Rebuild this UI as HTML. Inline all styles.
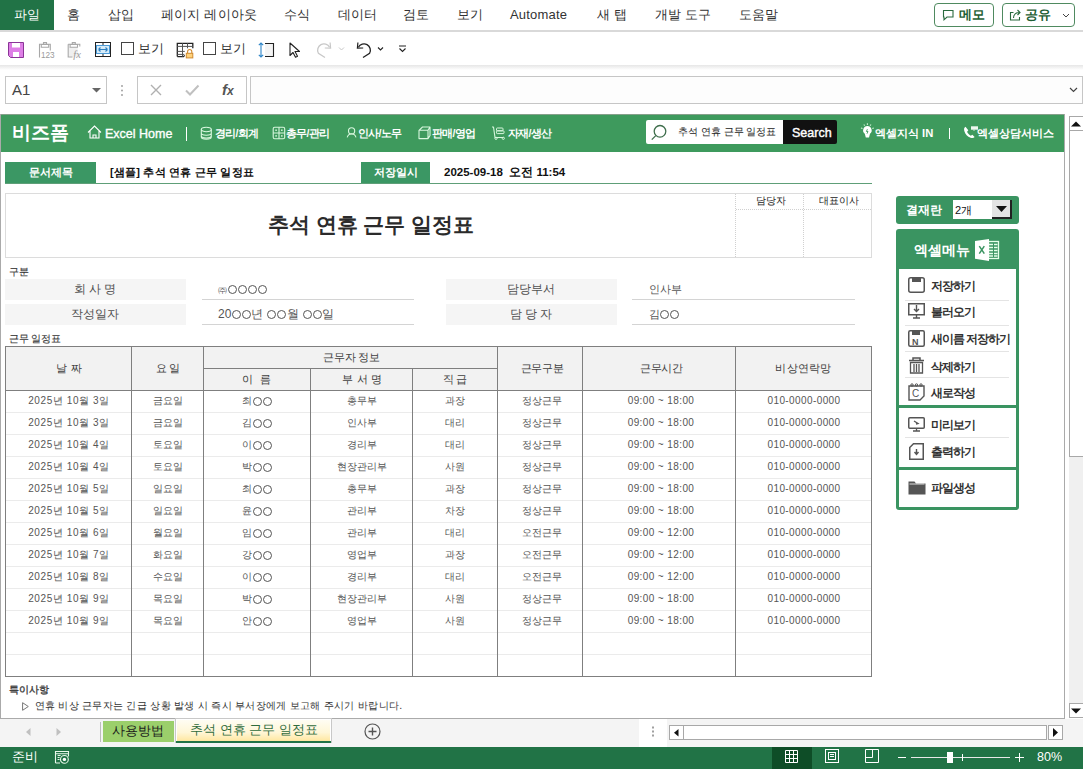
<!DOCTYPE html>
<html><head><meta charset="utf-8">
<style>
*{margin:0;padding:0;box-sizing:border-box}
html,body{width:1083px;height:769px;overflow:hidden;background:#fff;font-family:"Liberation Sans",sans-serif;color:#262626}
.a{position:absolute}
.t{position:absolute;white-space:nowrap;line-height:0;height:0}
.tc{position:absolute;white-space:nowrap;line-height:0;height:0;transform:translateX(-50%)}
svg{position:absolute;overflow:visible}
.o{display:inline-block;width:9px;height:9px;border:1px solid currentColor;border-radius:50%;vertical-align:0.3465em;margin:-4.5px 0.5px}
</style></head><body>

<div class="a" style="left:0px;top:0px;width:54px;height:30px;background:#217346"></div>
<div class="t" style="left:14px;top:15px;font-size:13px;color:#fff;font-weight:normal;letter-spacing:0.2px;">파일</div>
<div class="t" style="left:67px;top:15px;font-size:13px;color:#333;font-weight:normal;letter-spacing:0.2px;">홈</div>
<div class="t" style="left:108px;top:15px;font-size:13px;color:#333;font-weight:normal;letter-spacing:0.2px;">삽입</div>
<div class="t" style="left:161px;top:15px;font-size:13px;color:#333;font-weight:normal;letter-spacing:0.2px;">페이지 레이아웃</div>
<div class="t" style="left:284px;top:15px;font-size:13px;color:#333;font-weight:normal;letter-spacing:0.2px;">수식</div>
<div class="t" style="left:338px;top:15px;font-size:13px;color:#333;font-weight:normal;letter-spacing:0.2px;">데이터</div>
<div class="t" style="left:403px;top:15px;font-size:13px;color:#333;font-weight:normal;letter-spacing:0.2px;">검토</div>
<div class="t" style="left:457px;top:15px;font-size:13px;color:#333;font-weight:normal;letter-spacing:0.2px;">보기</div>
<div class="t" style="left:510px;top:15px;font-size:13px;color:#333;font-weight:normal;letter-spacing:0.2px;">Automate</div>
<div class="t" style="left:597px;top:15px;font-size:13px;color:#333;font-weight:normal;letter-spacing:0.2px;">새 탭</div>
<div class="t" style="left:655px;top:15px;font-size:13px;color:#333;font-weight:normal;letter-spacing:0.2px;">개발 도구</div>
<div class="t" style="left:739px;top:15px;font-size:13px;color:#333;font-weight:normal;letter-spacing:0.2px;">도움말</div>
<div class="a" style="left:0px;top:30px;width:1083px;height:2px;background:#d9d9d9"></div>
<div class="a" style="left:934px;top:3px;width:60px;height:24px;border:1px solid #4f8a60;border-radius:4px"></div>
<svg style="left:942px;top:9px" width="12" height="12" viewBox="0 0 12 12"><path d="M1.5 1.5h9.5v6.5h-6l-3 2.8v-2.8h-0.5z" fill="none" stroke="#2a6b3e" stroke-width="1.1"/></svg>
<div class="t" style="left:959px;top:15px;font-size:13px;color:#1e5e34;font-weight:bold;">메모</div>
<div class="a" style="left:1002px;top:3px;width:73px;height:24px;border:1px solid #4f8a60;border-radius:4px"></div>
<svg style="left:1009px;top:8px" width="13" height="13" viewBox="0 0 13 13"><path d="M4.5 4.5H1.5v7.5h9V9" fill="none" stroke="#2a6b3e" stroke-width="1.1"/><path d="M4.5 10c0-3.5 2.5-5.5 6-5.5M8.5 2L11 4.5 8.5 7" fill="none" stroke="#2a6b3e" stroke-width="1.1"/></svg>
<div class="t" style="left:1025px;top:15px;font-size:13px;color:#1e5e34;font-weight:bold;">공유</div>
<svg style="left:1062px;top:13px" width="8" height="5" viewBox="0 0 8 5"><path d="M1 1l3 3 3-3" fill="none" stroke="#444" stroke-width="1"/></svg>
<div class="a" style="left:0px;top:65px;width:1083px;height:5px;background:linear-gradient(#e6e6e6,#fff)"></div>
<svg style="left:8px;top:42px" width="16" height="16" viewBox="0 0 16 16"><path d="M0.5 0.5h15v15h-13l-2-2z" fill="#de7fe6" stroke="#8a3597" stroke-width="1"/><rect x="4" y="1" width="8" height="4.5" fill="#fff"/><rect x="5" y="10" width="6" height="5" fill="#fff"/></svg>
<svg style="left:38px;top:41px" width="16" height="18" viewBox="0 0 16 18"><path d="M1.5 16.6V3.2h10.8v6.2" fill="none" stroke="#a8a8a8" stroke-width="1.1"/><path d="M3.3 3.5h7.4v2.8H3.3zM5.5 3.5V1.6h3v1.9" fill="none" stroke="#a8a8a8" stroke-width="1.1"/><text x="3" y="16.9" font-size="8.2" fill="#9a9a9a" font-family="Liberation Sans">123</text></svg>
<svg style="left:67px;top:41px" width="16" height="18" viewBox="0 0 16 18"><rect x="1.7" y="6" width="9" height="9.6" fill="#f0f0f0"/><path d="M1.2 3.2v12.8h4.3M1.2 3.2h11.6v2.4" fill="none" stroke="#a8a8a8" stroke-width="1.1"/><path d="M3.1 3.5h7.4v2.8H3.1zM5.3 3.5V1.6h3v1.9" fill="none" stroke="#a8a8a8" stroke-width="1.1"/><text x="6.3" y="16.6" font-size="10.5" font-style="italic" fill="#9a9a9a" font-family="Liberation Serif">fx</text></svg>
<svg style="left:95px;top:42px" width="16" height="15" viewBox="0 0 16 15"><rect x="0.5" y="0.5" width="15" height="14" fill="#fff" stroke="#222" stroke-width="1"/><rect x="1.5" y="3.5" width="13" height="8" fill="#d6ebf8" stroke="#4b9ad6" stroke-width="1"/><path d="M3.5 7.5h9M3.5 7.5l2-2M3.5 7.5l2 2M12.5 7.5l-2-2M12.5 7.5l-2 2" stroke="#2d7fc0" stroke-width="1.1" fill="none"/><path d="M8 0.5v2.5M8 12v2.5" stroke="#222" stroke-width="1"/></svg>
<div class="a" style="left:121px;top:42px;width:13px;height:13px;border:1px solid #444"></div>
<div class="t" style="left:138px;top:49px;font-size:13px;color:#333;font-weight:normal;">보기</div>
<svg style="left:176px;top:42px" width="18" height="17" viewBox="0 0 18 17"><path d="M1.3 14.6V1.3h15.5v5M1.3 14.6h6.2l1.2-1.2" fill="none" stroke="#222" stroke-width="1.3"/><path d="M6.5 1.3v13.3M11.5 1.3v5M1.3 4.4h15.5M1.3 9.4h7.5M1.3 12.4h7" fill="none" stroke="#555" stroke-width="1"/><path d="M11.6 11.3V9.6a2.1 2.1 0 014.2 0v1.7" fill="none" stroke="#d08a30" stroke-width="1.1"/><rect x="10.3" y="11.3" width="6.5" height="4.6" fill="#ffd27a" stroke="#d08a30" stroke-width="1"/></svg>
<div class="a" style="left:203px;top:42px;width:13px;height:13px;border:1px solid #444"></div>
<div class="t" style="left:220px;top:49px;font-size:13px;color:#333;font-weight:normal;">보기</div>
<svg style="left:258px;top:41px" width="18" height="18" viewBox="0 0 18 18"><path d="M7 2.5h8.5v13H7" fill="#f4f4f4" stroke="#222" stroke-width="1.1"/><path d="M3 2v14M0.8 4.2L3 2l2.2 2.2M0.8 13.8L3 16l2.2-2.2" fill="none" stroke="#2f86c8" stroke-width="1.1"/></svg>
<svg style="left:289px;top:42px" width="13" height="16" viewBox="0 0 13 16"><path d="M1 1v12.5l3-3 2.5 4.8 2-1-2.5-4.8h4.5z" fill="#fff" stroke="#222" stroke-width="1.1" stroke-linejoin="round"/></svg>
<svg style="left:316px;top:41px" width="30" height="18" viewBox="0 0 30 18"><g transform="translate(17,0) scale(-1,1)"><path d="M3.4 6.2A6.2 6.2 0 1 1 14.6 12.3L8 16.5" fill="none" stroke="#c8c8c8" stroke-width="1.3"/><path d="M2.9 1.5L2.4 7.2L8.2 7" fill="none" stroke="#c8c8c8" stroke-width="1.2"/></g><path d="M23 6.5l2.5 2.5 2.5-2.5" fill="none" stroke="#c8c8c8" stroke-width="1"/></svg>
<svg style="left:355px;top:41px" width="30" height="18" viewBox="0 0 30 18"><path d="M3.4 6.2A6.2 6.2 0 1 1 14.6 12.3L8 16.5" fill="none" stroke="#222" stroke-width="1.3"/><path d="M2.9 1.5L2.4 7.2L8.2 7" fill="none" stroke="#222" stroke-width="1.2"/><path d="M23 6.5l2.5 2.5 2.5-2.5" fill="none" stroke="#222" stroke-width="1.1"/></svg>
<svg style="left:398px;top:45px" width="9" height="9" viewBox="0 0 9 9"><path d="M1 1h7M1.5 3.5l3 3 3-3" fill="none" stroke="#222" stroke-width="1.1"/></svg>
<div class="a" style="left:5px;top:76px;width:102px;height:28px;border:1px solid #c6c6c6;background:#fff"></div>
<div class="t" style="left:12px;top:90px;font-size:15px;color:#444;font-weight:normal;">A1</div>
<svg style="left:92px;top:88px" width="9" height="5" viewBox="0 0 9 5"><path d="M0 0h9L4.5 4.5z" fill="#666"/></svg>
<svg style="left:120px;top:83px" width="4" height="14" viewBox="0 0 4 14"><circle cx="2" cy="3" r="0.9" fill="#999"/><circle cx="2" cy="7.5" r="0.9" fill="#999"/><circle cx="2" cy="12" r="0.9" fill="#999"/></svg>
<div class="a" style="left:137px;top:76px;width:110px;height:28px;border:1px solid #c6c6c6;background:#fff"></div>
<svg style="left:150px;top:84px" width="12" height="12" viewBox="0 0 12 12"><path d="M1 1l10 10M11 1L1 11" stroke="#b0b0b0" stroke-width="1.4"/></svg>
<svg style="left:185px;top:84px" width="15" height="12" viewBox="0 0 15 12"><path d="M1 6.5l4 4 8.5-9" fill="none" stroke="#c0c0c0" stroke-width="2"/></svg>
<div class="t" style="left:222px;top:90px;font-size:15px;color:#555;font-weight:bold;font-family:"Liberation Serif",serif;"><i>f</i><span style="font-size:12px"><i>x</i></span></div>
<div class="a" style="left:250px;top:76px;width:833px;height:28px;border:1px solid #c6c6c6;background:#fdfdfd"></div>
<svg style="left:1069px;top:87px" width="9" height="6" viewBox="0 0 9 6"><path d="M1 1l3.5 3.5L8 1" fill="none" stroke="#444" stroke-width="1.2"/></svg>
<div class="a" style="left:0px;top:114px;width:1065px;height:605px;border-left:1px solid #aaa;border-right:1px solid #aaa;border-bottom:1px solid #aaa;background:#fff"></div>
<div class="a" style="left:1px;top:114px;width:1063px;height:38px;background:#3e9a5d"></div>
<div class="a" style="left:1px;top:114px;width:1063px;height:1px;background:#86a08b"></div>
<div class="t" style="left:12px;top:133px;font-size:19px;color:#fff;font-weight:bold;">비즈폼</div>
<svg style="left:87px;top:125px" width="15" height="14" viewBox="0 0 15 14"><path d="M1 7.5L7.5 1 14 7.5M3 6v7h9V6M6 13v-3h3v3" fill="none" stroke="#fff" stroke-width="1.1"/></svg>
<div class="t" style="left:105px;top:134px;font-size:12.5px;color:#fff;font-weight:normal;-webkit-text-stroke:0.35px #fff;">Excel Home</div>
<div class="a" style="left:186px;top:127px;width:1px;height:14px;background:#fff"></div>
<svg style="left:200px;top:126px" width="13" height="14" viewBox="0 0 13 14"><ellipse cx="6.3" cy="3.5" rx="5" ry="2.2" fill="none" stroke="#d8f7de" stroke-width="1.1"/><path d="M1.3 3.5v7.5c0 1.2 2.2 2.2 5 2.2s5-1 5-2.2V3.5M1.3 7c0 1.2 2.2 2.2 5 2.2s5-1 5-2.2M1.3 9.8c0 1.2 2.2 2.2 5 2.2s5-1 5-2.2" fill="none" stroke="#d8f7de" stroke-width="1.1"/></svg>
<div class="t" style="left:215px;top:133px;font-size:10.5px;color:#fff;font-weight:bold;letter-spacing:-0.8px;">경리/회계</div>
<svg style="left:272px;top:126px" width="14" height="14" viewBox="0 0 14 14"><rect x="1.2" y="1.2" width="11.5" height="11.5" rx="1.5" fill="none" stroke="#d8f7de" stroke-width="1.1"/><path d="M7 1.2v11.5M1.2 7h11.5" stroke="#d8f7de" stroke-width="1.1"/><rect x="3.3" y="3.5" width="1.6" height="1.4" fill="#d8f7de"/><rect x="9" y="3.5" width="1.6" height="1.4" fill="#d8f7de"/><rect x="3.3" y="9.2" width="1.6" height="1.4" fill="#d8f7de"/><rect x="9" y="9.2" width="1.6" height="1.4" fill="#d8f7de"/></svg>
<div class="t" style="left:286px;top:133px;font-size:10.5px;color:#fff;font-weight:bold;letter-spacing:-0.8px;">총무/관리</div>
<svg style="left:346px;top:126px" width="12" height="13" viewBox="0 0 12 13"><circle cx="5.6" cy="4.9" r="3.1" fill="none" stroke="#d8f7de" stroke-width="1.1"/><path d="M1.2 11.3c0.8-2.4 2.4-3.6 4.4-3.6s3.6 1.2 4.4 3.6" fill="none" stroke="#d8f7de" stroke-width="1.1"/></svg>
<div class="t" style="left:358px;top:133px;font-size:10.5px;color:#fff;font-weight:bold;letter-spacing:-0.8px;">인사/노무</div>
<svg style="left:418px;top:126px" width="13" height="14" viewBox="0 0 13 14"><path d="M1 4.3h9v8.3H1zM1 4.3L4.5 1h7.5L10 4.3M12 1v8.5l-2 3.1" fill="none" stroke="#d8f7de" stroke-width="1.1" stroke-linejoin="round"/></svg>
<div class="t" style="left:432px;top:133px;font-size:10.5px;color:#fff;font-weight:bold;letter-spacing:-0.8px;">판매/영업</div>
<svg style="left:491px;top:126px" width="15" height="14" viewBox="0 0 15 14"><path d="M1 1h1.5l1.5 10.5h8.5" fill="none" stroke="#d8f7de" stroke-width="1.1" stroke-linejoin="round"/><rect x="5.5" y="2" width="6.5" height="2.8" rx="0.8" fill="none" stroke="#d8f7de" stroke-width="1"/><rect x="5.5" y="4.8" width="7.5" height="2.8" rx="0.8" fill="none" stroke="#d8f7de" stroke-width="1"/><circle cx="5" cy="12.3" r="1.1" fill="none" stroke="#d8f7de" stroke-width="1"/><circle cx="12.3" cy="12.3" r="1.1" fill="none" stroke="#d8f7de" stroke-width="1"/></svg>
<div class="t" style="left:508px;top:133px;font-size:10.5px;color:#fff;font-weight:bold;letter-spacing:-0.8px;">자재/생산</div>
<div class="a" style="left:646px;top:120px;width:138px;height:24px;background:#fff;border-radius:2px 0 0 2px"></div>
<svg style="left:650px;top:124px" width="18" height="18" viewBox="0 0 18 18"><circle cx="10" cy="7.3" r="5.8" fill="none" stroke="#3f6e4c" stroke-width="1.3"/><path d="M5.8 11.6L1.8 15.6" stroke="#3f6e4c" stroke-width="1.3"/></svg>
<div class="t" style="left:678px;top:132px;font-size:10.2px;color:#222;font-weight:normal;">추석 연휴 근무 일정표</div>
<div class="a" style="left:783px;top:120px;width:54px;height:24px;background:#111;border-radius:0 2px 2px 0"></div>
<div class="t" style="left:792px;top:133px;font-size:12.5px;color:#fff;font-weight:normal;-webkit-text-stroke:0.4px #fff;">Search</div>
<svg style="left:860px;top:123px" width="15" height="16" viewBox="0 0 15 16"><path d="M7.4 3a4.3 4.3 0 00-2.6 7.7L5.8 14.5h3.2l1-3.8A4.3 4.3 0 007.4 3z" fill="#fff"/><path d="M7.4 6.2l-1 2.3h1.6l-1 2.2" fill="none" stroke="#3e9a5d" stroke-width="0.9"/><path d="M7.4 0.3v1.6M3.8 1.5l0.9 1.2M11 1.5l-0.9 1.2M1 5l1.5 0.6M13.8 5l-1.5 0.6" stroke="#c8f0d0" stroke-width="1.1"/></svg>
<div class="t" style="left:875px;top:133px;font-size:11.2px;color:#fff;font-weight:bold;">엑셀지식 IN</div>
<div class="a" style="left:949px;top:128px;width:1px;height:11px;background:#fff"></div>
<svg style="left:963px;top:125px" width="16" height="14" viewBox="0 0 16 14"><path d="M2.5 1.8C1.2 2.5 0.8 4 1.3 6c0.8 3 3.3 5.8 6.3 6.8 1.8 0.6 3.3 0.3 4-0.8l-2.2-2.2-1.6 1C6.3 10 4.7 8.2 4.1 6.7L5.3 5.3z" fill="#fff"/><rect x="8" y="1.3" width="7" height="3.4" fill="#eef7ef"/><path d="M10 4.7l1 1.3 1-1.3z" fill="#eef7ef"/></svg>
<div class="t" style="left:977px;top:133px;font-size:11.4px;color:#fff;font-weight:bold;">엑셀상담서비스</div>
<div class="a" style="left:5px;top:162px;width:91px;height:21px;background:#3b9764"></div>
<div class="tc" style="left:51px;top:172px;font-size:11px;color:#fff;font-weight:bold;">문서제목</div>
<div class="t" style="left:110px;top:171.5px;font-size:11px;color:#111;font-weight:bold;letter-spacing:0.2px;">[샘플] 추석 연휴 근무 일정표</div>
<div class="a" style="left:361px;top:162px;width:69px;height:21px;background:#3b9764"></div>
<div class="tc" style="left:396px;top:172px;font-size:11px;color:#fff;font-weight:bold;">저장일시</div>
<div class="t" style="left:444px;top:172px;font-size:11.5px;color:#111;font-weight:bold;">2025-09-18&nbsp; 오전 11:54</div>
<div class="a" style="left:5px;top:183px;width:867px;height:1px;background:#5e9f78"></div>
<div class="a" style="left:5px;top:193px;width:867px;height:65px;border:1px solid #dcdcdc"></div>
<div class="tc" style="left:371px;top:225px;font-size:21.4px;color:#2b2b2b;font-weight:bold;">추석 연휴 근무 일정표</div>
<div class="a" style="left:735px;top:194px;width:1px;height:63px;border-left:1px dotted #d0d0d0"></div>
<div class="a" style="left:803px;top:194px;width:1px;height:63px;border-left:1px dotted #d0d0d0"></div>
<div class="a" style="left:736px;top:209px;width:135px;height:1px;border-top:1px dotted #d0d0d0"></div>
<div class="tc" style="left:770.5px;top:200.5px;font-size:10px;color:#222;font-weight:normal;">담당자</div>
<div class="tc" style="left:838.5px;top:200.5px;font-size:10px;color:#222;font-weight:normal;">대표이사</div>
<div class="t" style="left:8.5px;top:272px;font-size:10px;color:#333;font-weight:normal;-webkit-text-stroke:0.1px #333;">구분</div>
<div class="a" style="left:5px;top:279px;width:181px;height:21px;background:#f5f5f5"></div>
<div class="tc" style="left:95px;top:289px;font-size:12px;color:#505050;font-weight:normal;">회 사 명</div>
<div class="t" style="left:218px;top:289px;font-size:12px;color:#555;font-weight:normal;"><span style="font-size:9px">㈜</span><span class="o"></span><span class="o"></span><span class="o"></span><span class="o"></span></div>
<div class="a" style="left:202px;top:299px;width:212px;height:1px;background:#d4d4d4"></div>
<div class="a" style="left:5px;top:304px;width:181px;height:21px;background:#f5f5f5"></div>
<div class="tc" style="left:95px;top:314px;font-size:12px;color:#505050;font-weight:normal;">작성일자</div>
<div class="t" style="left:218px;top:314px;font-size:12px;color:#555;font-weight:normal;">20<span class="o"></span><span class="o"></span>년 <span class="o"></span><span class="o"></span>월 <span class="o"></span><span class="o"></span>일</div>
<div class="a" style="left:202px;top:324px;width:212px;height:1px;background:#d4d4d4"></div>
<div class="a" style="left:446px;top:279px;width:171px;height:21px;background:#f5f5f5"></div>
<div class="tc" style="left:531px;top:289px;font-size:12px;color:#505050;font-weight:normal;">담당부서</div>
<div class="t" style="left:648.5px;top:289px;font-size:11px;color:#555;font-weight:normal;">인사부</div>
<div class="a" style="left:632px;top:299px;width:223px;height:1px;background:#d4d4d4"></div>
<div class="a" style="left:446px;top:304px;width:171px;height:21px;background:#f5f5f5"></div>
<div class="tc" style="left:531px;top:314px;font-size:12px;color:#505050;font-weight:normal;">담 당 자</div>
<div class="t" style="left:648.5px;top:314px;font-size:11px;color:#555;font-weight:normal;">김<span class="o"></span><span class="o"></span></div>
<div class="a" style="left:632px;top:324px;width:223px;height:1px;background:#d4d4d4"></div>
<div class="t" style="left:8.5px;top:339px;font-size:10px;color:#333;font-weight:normal;-webkit-text-stroke:0.1px #333;">근무 일정표</div>
<div class="a" style="left:5px;top:346px;width:867px;height:44px;background:#f2f2f2"></div>
<div class="a" style="left:6px;top:412px;width:865px;height:1px;background:#ebebeb"></div>
<div class="a" style="left:6px;top:434px;width:865px;height:1px;background:#ebebeb"></div>
<div class="a" style="left:6px;top:456px;width:865px;height:1px;background:#ebebeb"></div>
<div class="a" style="left:6px;top:478px;width:865px;height:1px;background:#ebebeb"></div>
<div class="a" style="left:6px;top:500px;width:865px;height:1px;background:#ebebeb"></div>
<div class="a" style="left:6px;top:522px;width:865px;height:1px;background:#ebebeb"></div>
<div class="a" style="left:6px;top:544px;width:865px;height:1px;background:#ebebeb"></div>
<div class="a" style="left:6px;top:566px;width:865px;height:1px;background:#ebebeb"></div>
<div class="a" style="left:6px;top:588px;width:865px;height:1px;background:#ebebeb"></div>
<div class="a" style="left:6px;top:610px;width:865px;height:1px;background:#ebebeb"></div>
<div class="a" style="left:6px;top:632px;width:865px;height:1px;background:#ebebeb"></div>
<div class="a" style="left:6px;top:654px;width:865px;height:1px;background:#ebebeb"></div>
<div class="a" style="left:5px;top:390px;width:867px;height:1px;background:#7f7f7f"></div>
<div class="a" style="left:203px;top:368px;width:294px;height:1px;background:#7f7f7f"></div>
<div class="a" style="left:5px;top:346px;width:1px;height:331px;background:#7f7f7f"></div>
<div class="a" style="left:131px;top:346px;width:1px;height:331px;background:#7f7f7f"></div>
<div class="a" style="left:203px;top:346px;width:1px;height:331px;background:#7f7f7f"></div>
<div class="a" style="left:310px;top:368px;width:1px;height:309px;background:#7f7f7f"></div>
<div class="a" style="left:412px;top:368px;width:1px;height:309px;background:#7f7f7f"></div>
<div class="a" style="left:497px;top:346px;width:1px;height:331px;background:#7f7f7f"></div>
<div class="a" style="left:582px;top:346px;width:1px;height:331px;background:#7f7f7f"></div>
<div class="a" style="left:735px;top:346px;width:1px;height:331px;background:#7f7f7f"></div>
<div class="a" style="left:871px;top:346px;width:1px;height:331px;background:#7f7f7f"></div>
<div class="a" style="left:5px;top:346px;width:867px;height:1px;background:#7f7f7f"></div>
<div class="a" style="left:5px;top:676px;width:867px;height:1px;background:#7f7f7f"></div>
<div class="tc" style="left:69.5px;top:368px;font-size:10.5px;color:#404040;font-weight:normal;letter-spacing:0.5px;">날 짜</div>
<div class="tc" style="left:168px;top:368px;font-size:10.5px;color:#404040;font-weight:normal;">요 일</div>
<div class="tc" style="left:351.5px;top:357px;font-size:10.5px;color:#404040;font-weight:normal;letter-spacing:-0.25px;">근무자 정보</div>
<div class="tc" style="left:257.5px;top:379px;font-size:10.5px;color:#404040;font-weight:normal;letter-spacing:2px;">이 름</div>
<div class="tc" style="left:362.5px;top:379px;font-size:10.5px;color:#404040;font-weight:normal;letter-spacing:0.3px;">부 서 명</div>
<div class="tc" style="left:455px;top:379px;font-size:10.5px;color:#404040;font-weight:normal;letter-spacing:-0.5px;">직 급</div>
<div class="tc" style="left:542px;top:368px;font-size:10.5px;color:#404040;font-weight:normal;letter-spacing:-0.25px;">근무구분</div>
<div class="tc" style="left:661px;top:368px;font-size:10.5px;color:#404040;font-weight:normal;letter-spacing:-0.5px;">근무시간</div>
<div class="tc" style="left:803.5px;top:368px;font-size:10.5px;color:#404040;font-weight:normal;letter-spacing:0.3px;">비상연락망</div>
<div class="tc" style="left:69px;top:401px;font-size:10px;color:#555;font-weight:normal;letter-spacing:0.6px;">2025년 10월 3일</div>
<div class="tc" style="left:168px;top:401px;font-size:10px;color:#555;font-weight:normal;">금요일</div>
<div class="tc" style="left:257px;top:401px;font-size:10px;color:#555;font-weight:normal;">최<span class="o"></span><span class="o"></span></div>
<div class="tc" style="left:362px;top:401px;font-size:10px;color:#555;font-weight:normal;">총무부</div>
<div class="tc" style="left:455px;top:401px;font-size:10px;color:#555;font-weight:normal;">과장</div>
<div class="tc" style="left:542px;top:401px;font-size:10px;color:#555;font-weight:normal;">정상근무</div>
<div class="tc" style="left:661px;top:401px;font-size:10px;color:#555;font-weight:normal;letter-spacing:0.4px;">09:00 ~ 18:00</div>
<div class="tc" style="left:804px;top:401px;font-size:10px;color:#555;font-weight:normal;letter-spacing:0.4px;">010-0000-0000</div>
<div class="tc" style="left:69px;top:423px;font-size:10px;color:#555;font-weight:normal;letter-spacing:0.6px;">2025년 10월 3일</div>
<div class="tc" style="left:168px;top:423px;font-size:10px;color:#555;font-weight:normal;">금요일</div>
<div class="tc" style="left:257px;top:423px;font-size:10px;color:#555;font-weight:normal;">김<span class="o"></span><span class="o"></span></div>
<div class="tc" style="left:362px;top:423px;font-size:10px;color:#555;font-weight:normal;">인사부</div>
<div class="tc" style="left:455px;top:423px;font-size:10px;color:#555;font-weight:normal;">대리</div>
<div class="tc" style="left:542px;top:423px;font-size:10px;color:#555;font-weight:normal;">정상근무</div>
<div class="tc" style="left:661px;top:423px;font-size:10px;color:#555;font-weight:normal;letter-spacing:0.4px;">09:00 ~ 18:00</div>
<div class="tc" style="left:804px;top:423px;font-size:10px;color:#555;font-weight:normal;letter-spacing:0.4px;">010-0000-0000</div>
<div class="tc" style="left:69px;top:445px;font-size:10px;color:#555;font-weight:normal;letter-spacing:0.6px;">2025년 10월 4일</div>
<div class="tc" style="left:168px;top:445px;font-size:10px;color:#555;font-weight:normal;">토요일</div>
<div class="tc" style="left:257px;top:445px;font-size:10px;color:#555;font-weight:normal;">이<span class="o"></span><span class="o"></span></div>
<div class="tc" style="left:362px;top:445px;font-size:10px;color:#555;font-weight:normal;">경리부</div>
<div class="tc" style="left:455px;top:445px;font-size:10px;color:#555;font-weight:normal;">대리</div>
<div class="tc" style="left:542px;top:445px;font-size:10px;color:#555;font-weight:normal;">정상근무</div>
<div class="tc" style="left:661px;top:445px;font-size:10px;color:#555;font-weight:normal;letter-spacing:0.4px;">09:00 ~ 18:00</div>
<div class="tc" style="left:804px;top:445px;font-size:10px;color:#555;font-weight:normal;letter-spacing:0.4px;">010-0000-0000</div>
<div class="tc" style="left:69px;top:467px;font-size:10px;color:#555;font-weight:normal;letter-spacing:0.6px;">2025년 10월 4일</div>
<div class="tc" style="left:168px;top:467px;font-size:10px;color:#555;font-weight:normal;">토요일</div>
<div class="tc" style="left:257px;top:467px;font-size:10px;color:#555;font-weight:normal;">박<span class="o"></span><span class="o"></span></div>
<div class="tc" style="left:362px;top:467px;font-size:10px;color:#555;font-weight:normal;">현장관리부</div>
<div class="tc" style="left:455px;top:467px;font-size:10px;color:#555;font-weight:normal;">사원</div>
<div class="tc" style="left:542px;top:467px;font-size:10px;color:#555;font-weight:normal;">정상근무</div>
<div class="tc" style="left:661px;top:467px;font-size:10px;color:#555;font-weight:normal;letter-spacing:0.4px;">09:00 ~ 18:00</div>
<div class="tc" style="left:804px;top:467px;font-size:10px;color:#555;font-weight:normal;letter-spacing:0.4px;">010-0000-0000</div>
<div class="tc" style="left:69px;top:489px;font-size:10px;color:#555;font-weight:normal;letter-spacing:0.6px;">2025년 10월 5일</div>
<div class="tc" style="left:168px;top:489px;font-size:10px;color:#555;font-weight:normal;">일요일</div>
<div class="tc" style="left:257px;top:489px;font-size:10px;color:#555;font-weight:normal;">최<span class="o"></span><span class="o"></span></div>
<div class="tc" style="left:362px;top:489px;font-size:10px;color:#555;font-weight:normal;">총무부</div>
<div class="tc" style="left:455px;top:489px;font-size:10px;color:#555;font-weight:normal;">과장</div>
<div class="tc" style="left:542px;top:489px;font-size:10px;color:#555;font-weight:normal;">정상근무</div>
<div class="tc" style="left:661px;top:489px;font-size:10px;color:#555;font-weight:normal;letter-spacing:0.4px;">09:00 ~ 18:00</div>
<div class="tc" style="left:804px;top:489px;font-size:10px;color:#555;font-weight:normal;letter-spacing:0.4px;">010-0000-0000</div>
<div class="tc" style="left:69px;top:511px;font-size:10px;color:#555;font-weight:normal;letter-spacing:0.6px;">2025년 10월 5일</div>
<div class="tc" style="left:168px;top:511px;font-size:10px;color:#555;font-weight:normal;">일요일</div>
<div class="tc" style="left:257px;top:511px;font-size:10px;color:#555;font-weight:normal;">윤<span class="o"></span><span class="o"></span></div>
<div class="tc" style="left:362px;top:511px;font-size:10px;color:#555;font-weight:normal;">관리부</div>
<div class="tc" style="left:455px;top:511px;font-size:10px;color:#555;font-weight:normal;">차장</div>
<div class="tc" style="left:542px;top:511px;font-size:10px;color:#555;font-weight:normal;">정상근무</div>
<div class="tc" style="left:661px;top:511px;font-size:10px;color:#555;font-weight:normal;letter-spacing:0.4px;">09:00 ~ 18:00</div>
<div class="tc" style="left:804px;top:511px;font-size:10px;color:#555;font-weight:normal;letter-spacing:0.4px;">010-0000-0000</div>
<div class="tc" style="left:69px;top:533px;font-size:10px;color:#555;font-weight:normal;letter-spacing:0.6px;">2025년 10월 6일</div>
<div class="tc" style="left:168px;top:533px;font-size:10px;color:#555;font-weight:normal;">월요일</div>
<div class="tc" style="left:257px;top:533px;font-size:10px;color:#555;font-weight:normal;">임<span class="o"></span><span class="o"></span></div>
<div class="tc" style="left:362px;top:533px;font-size:10px;color:#555;font-weight:normal;">관리부</div>
<div class="tc" style="left:455px;top:533px;font-size:10px;color:#555;font-weight:normal;">대리</div>
<div class="tc" style="left:542px;top:533px;font-size:10px;color:#555;font-weight:normal;">오전근무</div>
<div class="tc" style="left:661px;top:533px;font-size:10px;color:#555;font-weight:normal;letter-spacing:0.4px;">09:00 ~ 12:00</div>
<div class="tc" style="left:804px;top:533px;font-size:10px;color:#555;font-weight:normal;letter-spacing:0.4px;">010-0000-0000</div>
<div class="tc" style="left:69px;top:555px;font-size:10px;color:#555;font-weight:normal;letter-spacing:0.6px;">2025년 10월 7일</div>
<div class="tc" style="left:168px;top:555px;font-size:10px;color:#555;font-weight:normal;">화요일</div>
<div class="tc" style="left:257px;top:555px;font-size:10px;color:#555;font-weight:normal;">강<span class="o"></span><span class="o"></span></div>
<div class="tc" style="left:362px;top:555px;font-size:10px;color:#555;font-weight:normal;">영업부</div>
<div class="tc" style="left:455px;top:555px;font-size:10px;color:#555;font-weight:normal;">과장</div>
<div class="tc" style="left:542px;top:555px;font-size:10px;color:#555;font-weight:normal;">오전근무</div>
<div class="tc" style="left:661px;top:555px;font-size:10px;color:#555;font-weight:normal;letter-spacing:0.4px;">09:00 ~ 12:00</div>
<div class="tc" style="left:804px;top:555px;font-size:10px;color:#555;font-weight:normal;letter-spacing:0.4px;">010-0000-0000</div>
<div class="tc" style="left:69px;top:577px;font-size:10px;color:#555;font-weight:normal;letter-spacing:0.6px;">2025년 10월 8일</div>
<div class="tc" style="left:168px;top:577px;font-size:10px;color:#555;font-weight:normal;">수요일</div>
<div class="tc" style="left:257px;top:577px;font-size:10px;color:#555;font-weight:normal;">이<span class="o"></span><span class="o"></span></div>
<div class="tc" style="left:362px;top:577px;font-size:10px;color:#555;font-weight:normal;">경리부</div>
<div class="tc" style="left:455px;top:577px;font-size:10px;color:#555;font-weight:normal;">대리</div>
<div class="tc" style="left:542px;top:577px;font-size:10px;color:#555;font-weight:normal;">오전근무</div>
<div class="tc" style="left:661px;top:577px;font-size:10px;color:#555;font-weight:normal;letter-spacing:0.4px;">09:00 ~ 12:00</div>
<div class="tc" style="left:804px;top:577px;font-size:10px;color:#555;font-weight:normal;letter-spacing:0.4px;">010-0000-0000</div>
<div class="tc" style="left:69px;top:599px;font-size:10px;color:#555;font-weight:normal;letter-spacing:0.6px;">2025년 10월 9일</div>
<div class="tc" style="left:168px;top:599px;font-size:10px;color:#555;font-weight:normal;">목요일</div>
<div class="tc" style="left:257px;top:599px;font-size:10px;color:#555;font-weight:normal;">박<span class="o"></span><span class="o"></span></div>
<div class="tc" style="left:362px;top:599px;font-size:10px;color:#555;font-weight:normal;">현장관리부</div>
<div class="tc" style="left:455px;top:599px;font-size:10px;color:#555;font-weight:normal;">사원</div>
<div class="tc" style="left:542px;top:599px;font-size:10px;color:#555;font-weight:normal;">정상근무</div>
<div class="tc" style="left:661px;top:599px;font-size:10px;color:#555;font-weight:normal;letter-spacing:0.4px;">09:00 ~ 18:00</div>
<div class="tc" style="left:804px;top:599px;font-size:10px;color:#555;font-weight:normal;letter-spacing:0.4px;">010-0000-0000</div>
<div class="tc" style="left:69px;top:621px;font-size:10px;color:#555;font-weight:normal;letter-spacing:0.6px;">2025년 10월 9일</div>
<div class="tc" style="left:168px;top:621px;font-size:10px;color:#555;font-weight:normal;">목요일</div>
<div class="tc" style="left:257px;top:621px;font-size:10px;color:#555;font-weight:normal;">안<span class="o"></span><span class="o"></span></div>
<div class="tc" style="left:362px;top:621px;font-size:10px;color:#555;font-weight:normal;">영업부</div>
<div class="tc" style="left:455px;top:621px;font-size:10px;color:#555;font-weight:normal;">사원</div>
<div class="tc" style="left:542px;top:621px;font-size:10px;color:#555;font-weight:normal;">정상근무</div>
<div class="tc" style="left:661px;top:621px;font-size:10px;color:#555;font-weight:normal;letter-spacing:0.4px;">09:00 ~ 18:00</div>
<div class="tc" style="left:804px;top:621px;font-size:10px;color:#555;font-weight:normal;letter-spacing:0.4px;">010-0000-0000</div>
<div class="t" style="left:8.5px;top:690px;font-size:10px;color:#3a3a3a;font-weight:normal;-webkit-text-stroke:0.35px #3a3a3a;">특이사항</div>
<svg style="left:22px;top:702px" width="7" height="9" viewBox="0 0 7 9"><path d="M0.6 0.7v7.6L6.3 4.5z" fill="none" stroke="#777" stroke-width="1"/></svg>
<div class="t" style="left:34.5px;top:706px;font-size:10.4px;color:#333;font-weight:normal;letter-spacing:0.3px;">연휴 비상 근무자는 긴급 상황 발생 시 즉시 부서장에게 보고해 주시기 바랍니다.</div>
<div class="a" style="left:896px;top:196px;width:123px;height:28px;background:#3a9461;border-radius:3px"></div>
<div class="t" style="left:906px;top:210px;font-size:12px;color:#fff;font-weight:bold;">결재란</div>
<div class="a" style="left:953px;top:200px;width:59px;height:19px;background:#fff"></div>
<div class="t" style="left:955px;top:210px;font-size:11px;color:#111;font-weight:normal;">2개</div>
<div class="a" style="left:992px;top:200px;width:20px;height:19px;background:#e3e3e3;border-right:2px solid #222;border-bottom:2px solid #222"></div>
<svg style="left:996px;top:206px" width="11" height="7" viewBox="0 0 11 7"><path d="M0 0h11L5.5 6z" fill="#111"/></svg>
<div class="a" style="left:896px;top:229px;width:123px;height:281px;background:#3a9461;border-radius:3px"></div>
<div class="t" style="left:914px;top:250px;font-size:14px;color:#fff;font-weight:bold;">엑셀메뉴</div>
<svg style="left:975px;top:238px" width="25" height="24" viewBox="0 0 25 24"><rect x="13.5" y="3.5" width="10" height="17" fill="none" stroke="#e6ffe9" stroke-width="1.3"/><path d="M14 6.5h4M19 6.5h3.5M14 9.5h4M19 9.5h3.5M14 12.5h4M19 12.5h3.5M14 15.5h4M19 15.5h3.5M14 18h4M19 18h3.5" stroke="#e6ffe9" stroke-width="1.6"/><path d="M0 2.9L14 0.9V23L0 20.8z" fill="#fff"/><path d="M4.3 8.2L9.3 15.6M9.3 8.2L4.3 15.6" stroke="#3a9461" stroke-width="1.5"/></svg>
<div class="a" style="left:899px;top:269px;width:117px;height:136px;background:#fff"></div>
<div class="a" style="left:899px;top:408px;width:117px;height:59px;background:#fff"></div>
<div class="a" style="left:899px;top:470px;width:117px;height:37px;background:#fff"></div>
<div class="a" style="left:905px;top:300px;width:104px;height:1px;background:#e4e4e4"></div>
<div class="a" style="left:905px;top:325px;width:104px;height:1px;background:#e4e4e4"></div>
<div class="a" style="left:905px;top:351px;width:104px;height:1px;background:#e4e4e4"></div>
<div class="a" style="left:905px;top:377px;width:104px;height:1px;background:#e4e4e4"></div>
<div class="a" style="left:905px;top:437px;width:104px;height:1px;background:#e4e4e4"></div>
<div class="t" style="left:931px;top:285.5px;font-size:12px;color:#333;font-weight:bold;letter-spacing:-1px;">저장하기</div>
<div class="t" style="left:931px;top:311.5px;font-size:12px;color:#333;font-weight:bold;letter-spacing:-1px;">불러오기</div>
<div class="t" style="left:931px;top:338.5px;font-size:12px;color:#333;font-weight:bold;letter-spacing:-1px;">새이름 저장하기</div>
<div class="t" style="left:931px;top:366.5px;font-size:12px;color:#333;font-weight:bold;letter-spacing:-1px;">삭제하기</div>
<div class="t" style="left:931px;top:392.5px;font-size:12px;color:#333;font-weight:bold;letter-spacing:-1px;">새로작성</div>
<div class="t" style="left:931px;top:425px;font-size:12px;color:#333;font-weight:bold;letter-spacing:-1px;">미리보기</div>
<div class="t" style="left:931px;top:451.5px;font-size:12px;color:#333;font-weight:bold;letter-spacing:-1px;">출력하기</div>
<div class="t" style="left:931px;top:488px;font-size:12px;color:#333;font-weight:bold;letter-spacing:-1px;">파일생성</div>
<svg style="left:908px;top:277px" width="17" height="16" viewBox="0 0 17 16"><rect x="0.75" y="0.75" width="15.5" height="14.5" rx="2" fill="none" stroke="#555" stroke-width="1.5"/><rect x="4" y="1" width="9" height="4" fill="#555"/></svg>
<svg style="left:908px;top:303px" width="17" height="16" viewBox="0 0 17 16"><rect x="0.75" y="0.75" width="15.5" height="11" fill="none" stroke="#555" stroke-width="1.5"/><path d="M5 15h7M8.5 12v3M8.5 2v6M6 6l2.5 2.5L11 6" fill="none" stroke="#555" stroke-width="1.4"/></svg>
<svg style="left:908px;top:330px" width="17" height="17" viewBox="0 0 17 17"><rect x="0.75" y="0.75" width="15.5" height="15.5" rx="1.5" fill="none" stroke="#555" stroke-width="1.5"/><rect x="4" y="1" width="8" height="4" fill="#555"/><text x="4" y="15" font-size="9" font-weight="bold" fill="#555" font-family="Liberation Sans">N</text></svg>
<svg style="left:909px;top:357px" width="15" height="17" viewBox="0 0 15 17"><path d="M0 3.5h15M4 3.5V1h7v2.5" fill="none" stroke="#555" stroke-width="1.5"/><path d="M1.5 5.5h12V16h-12zM5 7v8M7.5 7v8M10 7v8" fill="none" stroke="#555" stroke-width="1.3"/></svg>
<svg style="left:908px;top:383px" width="17" height="18" viewBox="0 0 17 18"><path d="M1 3h15v10l-4 4H1z" fill="none" stroke="#555" stroke-width="1.4"/><circle cx="4" cy="2" r="1.2" fill="none" stroke="#555"/><circle cx="8.5" cy="2" r="1.2" fill="none" stroke="#555"/><circle cx="13" cy="2" r="1.2" fill="none" stroke="#555"/><text x="4" y="14" font-size="10" fill="#555" font-family="Liberation Sans">C</text></svg>
<svg style="left:908px;top:417px" width="17" height="15" viewBox="0 0 17 15"><rect x="0.75" y="0.75" width="15.5" height="10.5" rx="1" fill="none" stroke="#555" stroke-width="1.5"/><path d="M5 14h7M8.5 11v3M6 4l4 2.5-2 .5" fill="none" stroke="#555" stroke-width="1.3"/></svg>
<svg style="left:909px;top:443px" width="15" height="17" viewBox="0 0 15 17"><path d="M4.5 0.75h9.75v15.5H0.75V4.5z" fill="none" stroke="#555" stroke-width="1.5"/><path d="M7.5 6v5M5.5 9l2 2.5 2-2.5" fill="none" stroke="#555" stroke-width="1.4"/></svg>
<svg style="left:908px;top:480px" width="18" height="15" viewBox="0 0 18 15"><path d="M0.5 1.5h6l1.5 2h9.5v11H0.5z" fill="#555"/><path d="M1.5 4h15" stroke="#fff" stroke-width="0.8"/></svg>
<div class="a" style="left:1069px;top:116px;width:14px;height:601px;background:#f0f0f0"></div>
<div class="a" style="left:1069px;top:116px;width:16px;height:341px;background:#fff;border:1px solid #a8a8a8"></div>
<div class="a" style="left:1069px;top:116px;width:16px;height:15px;background:#fff;border:1px solid #a8a8a8"></div>
<svg style="left:1071px;top:121px" width="10" height="6" viewBox="0 0 10 6"><path d="M0 5.5h10L5 0.5z" fill="#111"/></svg>
<div class="a" style="left:1069px;top:703px;width:16px;height:15px;background:#fff;border:1px solid #a8a8a8"></div>
<svg style="left:1071px;top:708px" width="10" height="6" viewBox="0 0 10 6"><path d="M0 0.5h10L5 5.5z" fill="#111"/></svg>
<div class="a" style="left:0px;top:719px;width:1083px;height:28px;background:#f4f4f4"></div>
<svg style="left:26px;top:728px" width="5" height="8" viewBox="0 0 5 8"><path d="M4.5 0L0 4l4.5 4z" fill="#c0c0c0"/></svg>
<svg style="left:56px;top:728px" width="5" height="8" viewBox="0 0 5 8"><path d="M0.5 0L5 4 0.5 8z" fill="#c0c0c0"/></svg>
<div class="a" style="left:100px;top:722px;width:1px;height:20px;background:#bdbdbd"></div>
<div class="a" style="left:103px;top:721px;width:71px;height:21px;background:#9bcf6b"></div>
<div class="tc" style="left:138px;top:731px;font-size:13px;color:#1a1a1a;font-weight:normal;">사용방법</div>
<div class="a" style="left:175px;top:718px;width:157px;height:25px;background:#fff;border-left:1px solid #c8c8c8;border-right:1px solid #c8c8c8;border-top:1px solid #c8c8c8"></div>
<div class="a" style="left:177px;top:720px;width:153px;height:21px;background:linear-gradient(#fffdf3,#fff6d6 60%,#ffe7a0)"></div>
<div class="a" style="left:176px;top:741px;width:155px;height:2px;background:#217346"></div>
<div class="tc" style="left:254px;top:730px;font-size:13px;color:#2f6b3c;font-weight:normal;">추석 연휴 근무 일정표</div>
<svg style="left:364px;top:723px" width="17" height="17" viewBox="0 0 17 17"><circle cx="8.5" cy="8.5" r="7.5" fill="none" stroke="#555" stroke-width="1.2"/><path d="M8.5 4.5v8M4.5 8.5h8" stroke="#555" stroke-width="1.4"/></svg>
<div class="a" style="left:639px;top:719px;width:28px;height:28px;background:#fff"></div>
<svg style="left:652px;top:726px" width="2" height="11" viewBox="0 0 2 11"><rect x="0" y="0.5" width="2" height="2" fill="#a0a0a0"/><rect x="0" y="4.5" width="2" height="2" fill="#a0a0a0"/><rect x="0" y="8.5" width="2" height="2" fill="#a0a0a0"/></svg>
<div class="a" style="left:669px;top:725px;width:378px;height:15px;background:#fff;border:1px solid #a8a8a8"></div>
<div class="a" style="left:669px;top:725px;width:15px;height:15px;background:#fff;border:1px solid #a8a8a8"></div>
<div class="a" style="left:1048px;top:725px;width:15px;height:15px;background:#fff;border:1px solid #a8a8a8"></div>
<svg style="left:674px;top:729px" width="5" height="8" viewBox="0 0 5 8"><path d="M4.5 0L0 3.8 4.5 7.6z" fill="#111"/></svg>
<svg style="left:1053px;top:728px" width="5" height="9" viewBox="0 0 5 9"><path d="M0 0l5 4.5L0 9z" fill="#111"/></svg>
<div class="a" style="left:0px;top:747px;width:1083px;height:22px;background:#217346"></div>
<div class="t" style="left:12px;top:757px;font-size:12.5px;color:#fff;font-weight:normal;">준비</div>
<svg style="left:54px;top:750px" width="16" height="15" viewBox="0 0 16 15"><path d="M1.5 13V1.5h13V6.5M1.5 13H6M1.5 3.8h13" fill="none" stroke="#e8f8ea" stroke-width="1.1"/><path d="M3.6 5.5h3M3.6 7.5h2M3.6 9.5h2" stroke="#e8f8ea" stroke-width="1"/><circle cx="10.4" cy="9.4" r="3.9" fill="#217346" stroke="#e8f8ea" stroke-width="1.1"/><circle cx="10.4" cy="9.4" r="1.7" fill="#fff"/></svg>
<div class="a" style="left:772px;top:747px;width:40px;height:22px;background:#0e4d27"></div>
<svg style="left:785px;top:750px" width="13" height="13" viewBox="0 0 13 13"><path d="M0.5 0.5h12v12h-12zM0.5 4.5h12M0.5 8.5h12M4.5 0.5v12M8.5 0.5v12" fill="none" stroke="#fff" stroke-width="1"/></svg>
<svg style="left:825px;top:749px" width="14" height="14" viewBox="0 0 14 14"><rect x="0.5" y="0.5" width="13" height="13" fill="none" stroke="#fff"/><rect x="3.5" y="3.5" width="7" height="7" fill="none" stroke="#fff"/><path d="M5 5.5h4M5 7.5h4" stroke="#fff"/></svg>
<svg style="left:865px;top:749px" width="14" height="14" viewBox="0 0 14 14"><path d="M0.5 13.5V0.5h13v13h-13M0.5 8.5h7V0.5" fill="none" stroke="#fff"/></svg>
<div class="a" style="left:898px;top:757px;width:8px;height:1px;background:#fff"></div>
<div class="a" style="left:911px;top:757px;width:99px;height:1px;background:#e8e8e8"></div>
<div class="a" style="left:947px;top:752px;width:6px;height:11px;background:#fff"></div>
<div class="a" style="left:962px;top:754px;width:1px;height:7px;background:#fff"></div>
<div class="a" style="left:1015px;top:757px;width:9px;height:1px;background:#fff"></div>
<div class="a" style="left:1019px;top:753px;width:1px;height:9px;background:#fff"></div>
<div class="t" style="left:1037px;top:757px;font-size:12.5px;color:#fff;font-weight:normal;">80%</div>
</body></html>
